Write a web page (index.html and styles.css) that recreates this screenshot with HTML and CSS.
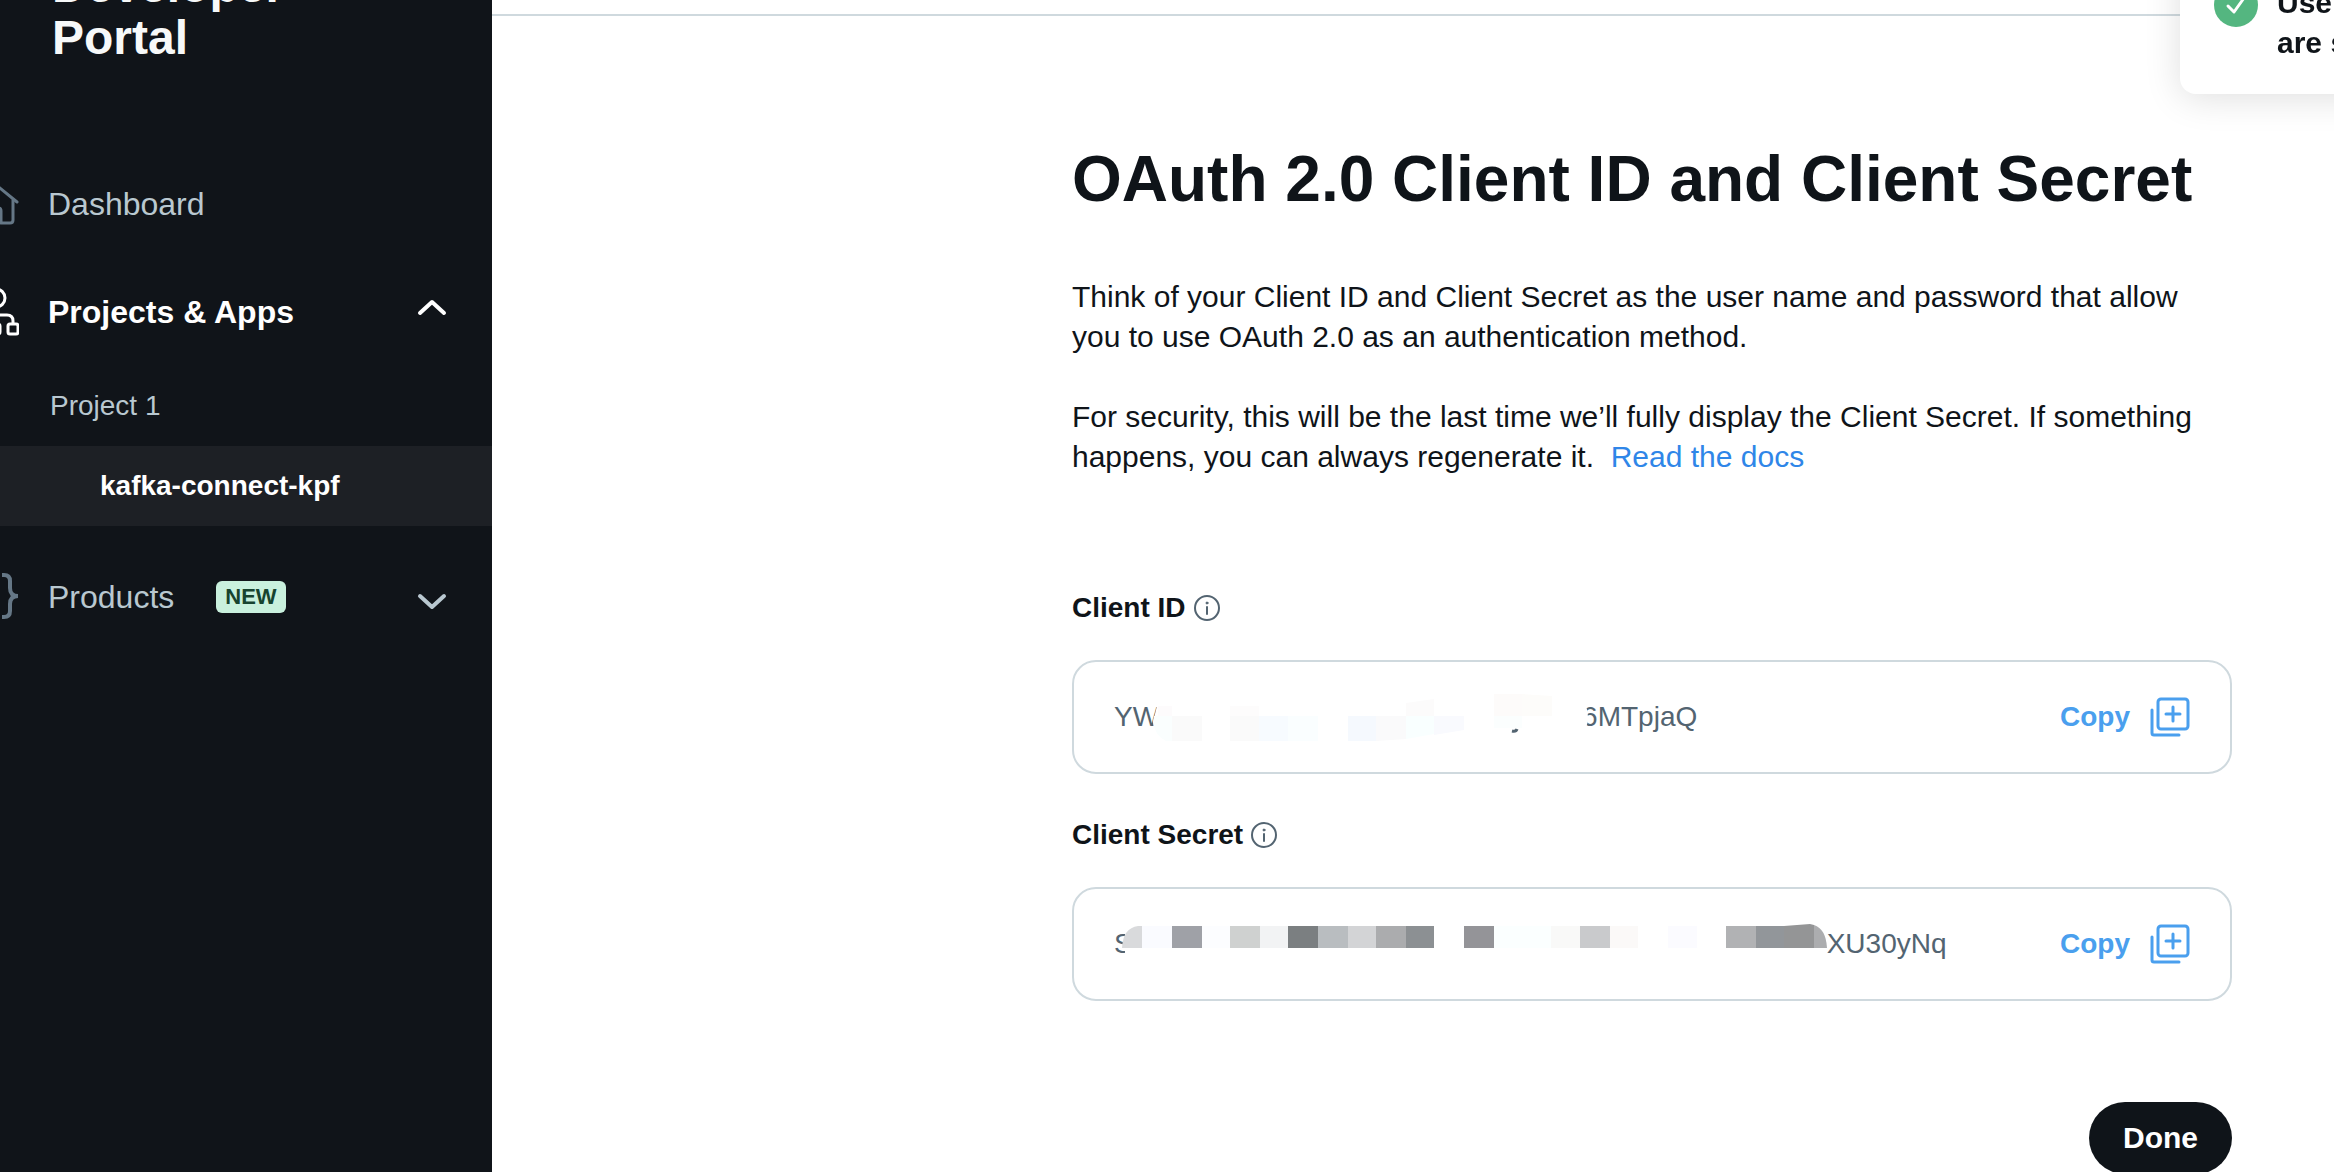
FILE: index.html
```html
<!DOCTYPE html>
<html lang="en">
<head>
    <meta charset="UTF-8">
    <meta name="viewport" content="width=device-width, initial-scale=1.0">
    <title>Developer Portal</title>
    <link rel="stylesheet" href="styles.css">
</head>
<body>
    <div class="layout">
        <!-- Sidebar -->
        <aside class="sidebar">
            <div class="brand">Developer<br>Portal</div>
            <nav>
                <ul class="nav">
                    <li>
                        <a href="#dashboard" class="nav-link">
                            <svg class="nav-icon" viewBox="0 0 48 48" fill="none" stroke="#657786" stroke-width="3" stroke-linecap="round" stroke-linejoin="round">
                                <path d="M2 22 L24 4 L46 22"/>
                                <path d="M42 20 V40 Q42 43 39 43 H30 V31 Q30 28 27 28 H21 Q18 28 18 31 V43 H9 Q6 43 6 40 V20"/>
                            </svg>
                            <span>Dashboard</span>
                        </a>
                    </li>
                    <li>
                        <a href="#projects" class="nav-link active">
                            <svg class="nav-icon" viewBox="0 0 48 48" fill="none" stroke="#fff" stroke-width="3" stroke-linejoin="round">
                                <circle cx="25" cy="10" r="9"/>
                                <path d="M24 19 V36 M6 36 V33 Q6 27 12 27 H36 Q42 27 42 33 V36"/>
                                <rect x="1" y="36" width="10" height="10" rx="2"/>
                                <rect x="19" y="36" width="10" height="10" rx="2"/>
                                <rect x="37" y="36" width="10" height="10" rx="2"/>
                            </svg>
                            <span>Projects &amp; Apps</span>
                            <svg class="chevron" viewBox="0 0 30 26" fill="none" stroke="#fff" stroke-width="4" stroke-linecap="round" stroke-linejoin="round">
                                <path d="M3 14 L15 3 L27 14"/>
                            </svg>
                        </a>
                        <ul class="sub-nav">
                            <li><a href="#project-1" class="sub-link">Project 1</a></li>
                            <li><a href="#kafka-connect-kpf" class="sub-link app current">kafka-connect-kpf</a></li>
                        </ul>
                    </li>
                    <li>
                        <a href="#products" class="nav-link">
                            <svg class="nav-icon" viewBox="0 0 48 48" fill="none" stroke="#657786" stroke-width="4">
                                <path d="M31 2 H33 Q39 2 39 8 V15 Q39 23 47 23 Q39 23 39 31 V38 Q39 44 33 44 H31"/>
                                <path d="M17 2 H15 Q9 2 9 8 V15 Q9 23 1 23 Q9 23 9 31 V38 Q9 44 15 44 H17"/>
                            </svg>
                            <span>Products</span>
                            <span class="badge">NEW</span>
                            <svg class="chevron" viewBox="0 0 30 26" fill="none" stroke="#b9c8d0" stroke-width="4" stroke-linecap="round" stroke-linejoin="round">
                                <path d="M3 12 L15 23 L27 12"/>
                            </svg>
                        </a>
                    </li>
                </ul>
            </nav>
        </aside>

        <!-- Main content -->
        <div class="page">
            <header class="topbar"></header>
            <main class="content">
                <h1>OAuth 2.0 Client ID and Client Secret</h1>
                <p>Think of your Client ID and Client Secret as the user name and password that allow you to use OAuth 2.0 as an authentication method.</p>
                <p>For security, this will be the last time we’ll fully display the Client Secret. If something happens, you can always regenerate it.&nbsp; <a href="#docs">Read the docs</a></p>

                <section class="keys">
                    <h2>Client ID
                        <svg class="info" viewBox="0 0 26 26" fill="none" stroke="#536471" stroke-width="2" stroke-linecap="round">
                            <circle cx="13" cy="13" r="12"/>
                            <path d="M13 12 V19"/>
                            <circle cx="13" cy="8" r="1" fill="#536471" stroke-width="1"/>
                        </svg>
                    </h2>
                    <div class="key-box">
                        <div class="key-value">
                            <span>YW</span>
                            <svg class="mask mask-id" viewBox="0 0 442 54">
                                <path d="M8 12 H430 Q438 14 438 27 Q438 40 430 42 H300 L240 50 H22 Q4 46 3 32 Z" fill="#fff"/>
                                <path d="M4 26 H22 V51 H16 Q5 46 3 32 Z" fill="#fafefe"/>
                                <rect x="8" y="16" width="14" height="10" fill="#fdfbfc"/>
                                <rect x="22" y="26" width="30" height="25" fill="#fafafa"/>
                                <rect x="80" y="16" width="29" height="10" fill="#fdfcfc"/>
                                <rect x="80" y="26" width="29" height="25" fill="#fafafa"/>
                                <rect x="109" y="26" width="29" height="25" fill="#f7fbff"/>
                                <rect x="138" y="26" width="30" height="25" fill="#fafeff"/>
                                <rect x="198" y="26" width="28" height="25" fill="#f5f9fe"/>
                                <path d="M226 26 H256 V49 L226 51 Z" fill="#fafafb"/>
                                <path d="M256 13 L284 9 V26 H256 Z" fill="#fcfbfb"/>
                                <path d="M256 26 H284 V44 L256 49 Z" fill="#f9ffff"/>
                                <path d="M284 26 H314 V40 L284 45 Z" fill="#f9fafe"/>
                                <rect x="344" y="4" width="28" height="22" fill="#fdfbfa"/>
                                <path d="M372 4 L402 6 V26 H372 Z" fill="#fdfcfa"/>
                                <rect x="344" y="26" width="28" height="12" fill="#fbfefe"/>
                                <path d="M362 41 Q366 42 367 39" fill="none" stroke="#536471" stroke-width="3"/>
                            </svg>
                            <span>6MTpjaQ</span>
                        </div>
                        <button type="button" class="copy" data-copy="Client ID">Copy
                            <svg viewBox="0 0 40 40" fill="none" stroke="#4a9fee" stroke-width="3" stroke-linecap="round" stroke-linejoin="round">
                                <rect x="8" y="2" width="30" height="30" rx="3"/>
                                <path d="M23 10 V24 M16 17 H30"/>
                                <path d="M2 13 V36 Q2 38 4 38 H29"/>
                            </svg>
                        </button>
                    </div>

                    <h2>Client Secret
                        <svg class="info" viewBox="0 0 26 26" fill="none" stroke="#536471" stroke-width="2" stroke-linecap="round">
                            <circle cx="13" cy="13" r="12"/>
                            <path d="M13 12 V19"/>
                            <circle cx="13" cy="8" r="1" fill="#536471" stroke-width="1"/>
                        </svg>
                    </h2>
                    <div class="key-box">
                        <div class="key-value">
                            <span>S</span>
                            <svg class="mask mask-secret" viewBox="0 0 709 54">
                                <rect x="7" y="14" width="30" height="32" fill="#fff"/>
                                <path d="M24 9 V31 H4 Q5 11 20 9 Z" fill="#d9dadc"/>
                                <rect x="24" y="9" width="30" height="22" fill="#fafbff"/>
                                <rect x="54" y="9" width="30" height="22" fill="#9fa1a7"/>
                                <rect x="84" y="9" width="28" height="22" fill="#fcfdff"/>
                                <rect x="112" y="9" width="30" height="22" fill="#cfd1d0"/>
                                <rect x="142" y="9" width="28" height="22" fill="#f2f3f4"/>
                                <rect x="170" y="9" width="30" height="22" fill="#7b7f81"/>
                                <rect x="200" y="9" width="30" height="22" fill="#b9bdc0"/>
                                <rect x="230" y="9" width="28" height="22" fill="#d3d4d6"/>
                                <rect x="258" y="9" width="30" height="22" fill="#abacae"/>
                                <rect x="288" y="9" width="28" height="22" fill="#8c9093"/>
                                <rect x="346" y="9" width="30" height="22" fill="#949498"/>
                                <rect x="376" y="9" width="57" height="22" fill="#fbffff"/>
                                <rect x="433" y="9" width="29" height="22" fill="#f9f9f8"/>
                                <rect x="462" y="9" width="30" height="22" fill="#c9cacc"/>
                                <rect x="492" y="9" width="28" height="22" fill="#fbf9f8"/>
                                <rect x="550" y="9" width="29" height="22" fill="#fbfbff"/>
                                <rect x="608" y="9" width="30" height="22" fill="#b1b2b4"/>
                                <rect x="638" y="9" width="28" height="22" fill="#92969a"/>
                                <path d="M666 9 L692 7 L696 8 V31 H666 Z" fill="#949596"/>
                                <path d="M696 8 Q708 12 709 31 H696 Z" fill="#acadaf"/>
                            </svg>
                            <span>XU30yNq</span>
                        </div>
                        <button type="button" class="copy" data-copy="Client Secret">Copy
                            <svg viewBox="0 0 40 40" fill="none" stroke="#4a9fee" stroke-width="3" stroke-linecap="round" stroke-linejoin="round">
                                <rect x="8" y="2" width="30" height="30" rx="3"/>
                                <path d="M23 10 V24 M16 17 H30"/>
                                <path d="M2 13 V36 Q2 38 4 38 H29"/>
                            </svg>
                        </button>
                    </div>
                </section>

                <div class="actions">
                    <button type="button" class="done">Done</button>
                </div>
            </main>
        </div>
    </div>

    <!-- Notification -->
    <div class="toast" role="status">
        <svg viewBox="0 0 44 44" fill="none">
            <circle cx="22" cy="22" r="22" fill="#54b680"/>
            <path d="M14 23 L20 29 L30 15" stroke="#fff" stroke-width="3" stroke-linecap="round" stroke-linejoin="round"/>
        </svg>
        <span>User authentication settings<br>are saved</span>
    </div>
</body>
</html>
```
FILE: styles.css
```css
/* Reset and base styles */
* {
    box-sizing: border-box;
    margin: 0;
    padding: 0;
}

body {
    font-family: "Liberation Sans", Arial, sans-serif;
    font-size: 28px;
    line-height: 40px;
    color: #0f1419;
    background: #fff;
    height: 100vh;
    overflow: hidden;
}

a {
    text-decoration: none;
}

ul {
    list-style: none;
}

button {
    font: inherit;
    font-weight: 700;
    border: none;
    cursor: pointer;
}

.layout {
    display: flex;
    min-height: 100vh;
}

/* Sidebar */
.sidebar {
    flex: 0 0 492px;
    background: #101419;
    overflow: hidden;
}

.brand {
    margin: -40px 0 86px 52px;
    font-size: 48px;
    font-weight: 700;
    line-height: 52px;
    color: #f7f9f9;
}

.nav-link {
    display: flex;
    align-items: center;
    height: 108px;
    margin-left: -29px;
    padding-right: 45px;
    font-size: 32px;
    color: #b9c8d0;
}

.nav-link.active {
    font-weight: 700;
    color: #fff;
}

.nav-icon {
    width: 48px;
    height: 48px;
    margin-right: 29px;
}

.chevron {
    width: 30px;
    height: 26px;
    margin-left: auto;
}

.badge {
    margin-left: 42px;
    padding: 0 9px;
    border-radius: 6px;
    background: #c9f0dd;
    font-size: 22px;
    font-weight: 700;
    line-height: 32px;
    color: #17432f;
}

.sub-nav {
    margin-bottom: 17px;
}

.sub-link {
    display: block;
    padding: 20px 0 20px 50px;
    color: #b9c8d0;
}

.sub-link.app {
    padding-left: 100px;
}

.sub-link.current {
    background: #1d2025;
    font-weight: 700;
    color: #fff;
}

/* Page */
.page {
    flex: 1;
}

.topbar {
    height: 16px;
    border-bottom: 2px solid #cfd9de;
}

.content {
    max-width: 1262px;
    margin-left: auto;
    padding: 123px 102px 0 0;
}

h1 {
    margin-bottom: 58px;
    font-size: 64px;
    line-height: 80px;
}

p {
    margin-bottom: 40px;
    font-size: 30px;
}

p a {
    color: #2f86e8;
}

/* Keys */
.keys {
    padding-top: 71px;
}

h2 {
    display: flex;
    align-items: center;
    gap: 8px;
    margin-bottom: 32px;
    font-size: 28px;
}

.info {
    width: 26px;
    height: 26px;
}

.key-box {
    display: flex;
    align-items: center;
    justify-content: space-between;
    height: 114px;
    margin-bottom: 41px;
    padding: 0 40px;
    border: 2px solid #cfd9de;
    border-radius: 24px;
}

.key-value {
    display: flex;
    align-items: center;
    color: #536471;
}

/* Pixelated strip over the hidden part of a key */
.mask {
    position: relative;
    height: 54px;
}

.mask-id {
    width: 442px;
    margin: 0 -10px 0 -9px;
}

.mask-secret {
    width: 709px;
    margin-left: -15px;
}

.copy {
    display: flex;
    align-items: center;
    gap: 20px;
    background: none;
    color: #4a9fee;
}

.copy svg {
    width: 40px;
    height: 40px;
}

.actions {
    display: flex;
    justify-content: flex-end;
    padding-top: 60px;
}

.done {
    padding: 16px 34px;
    border-radius: 36px;
    background: #0f1419;
    font-size: 30px;
    color: #fff;
}

/* Toast */
.toast {
    position: fixed;
    top: -49px;
    left: calc(100% - 154px);
    display: flex;
    gap: 19px;
    padding: 32px 34px 31px;
    border-radius: 16px;
    background: #fff;
    box-shadow: 0 4px 36px rgba(0, 0, 0, 0.13);
    font-size: 30px;
    font-weight: 700;
    white-space: nowrap;
}

.toast svg {
    width: 44px;
    height: 44px;
}
```
